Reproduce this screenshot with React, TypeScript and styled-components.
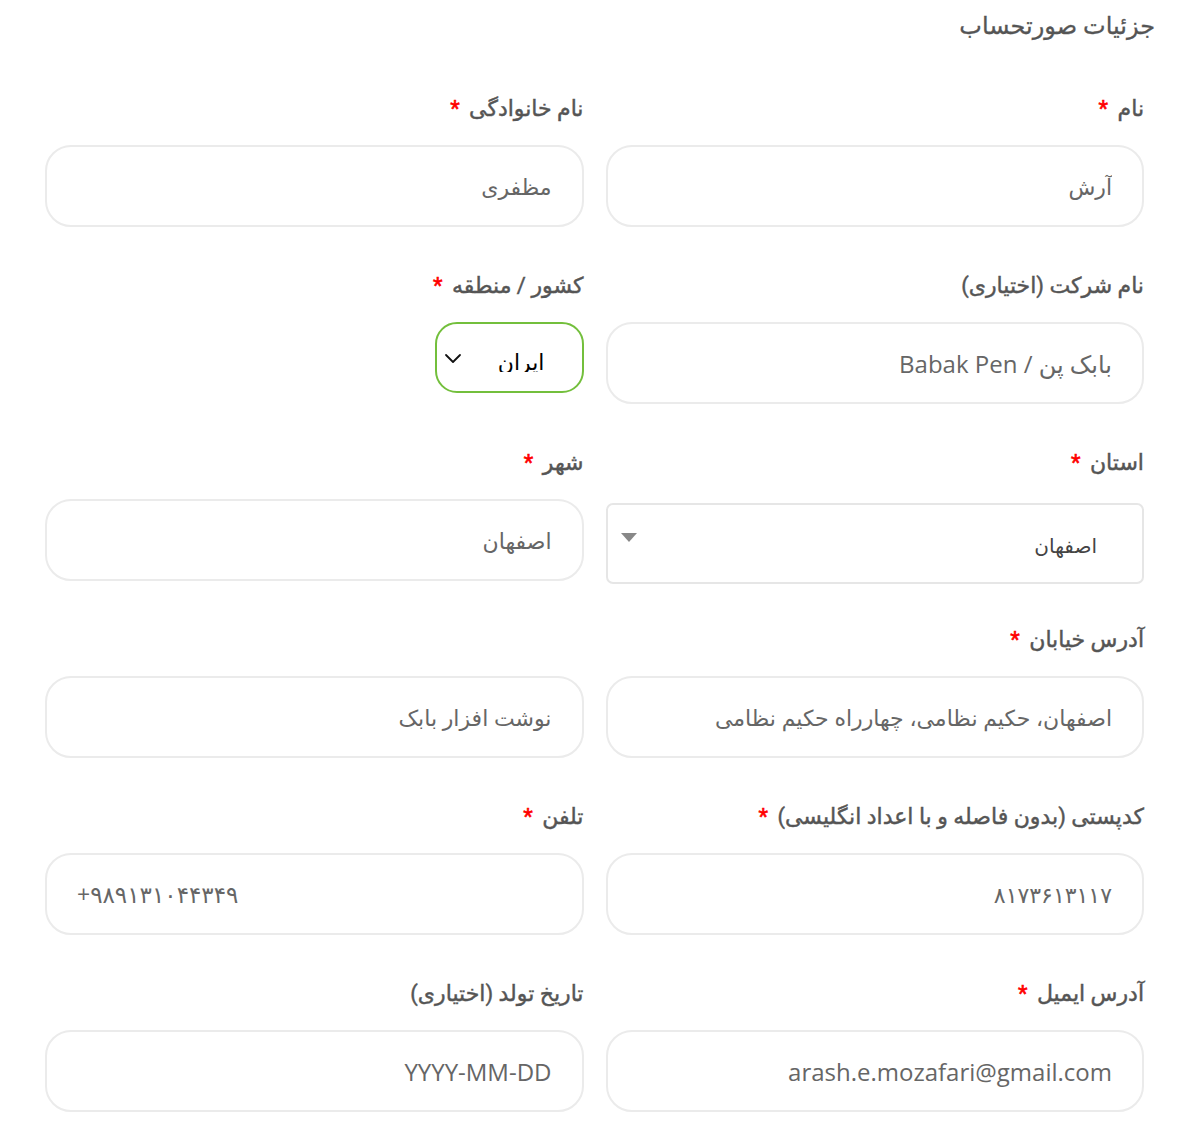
import React from 'react';
import styled, { createGlobalStyle } from 'styled-components';

const GlobalStyle = createGlobalStyle`
    body {
        margin: 0;
        background: #fff;
        font-family: Roboto, "DejaVu Sans", sans-serif;
    }
`;

const Page = styled.div`
    direction: rtl;
    padding: 0 44px 0 45px;
`;

const Title = styled.h3`
    margin: 0 -11px 0 0;
    padding-top: 10px;
    height: 89px;
    box-sizing: border-box;
    font-size: 24px;
    line-height: 32px;
    font-weight: 400;
    -webkit-text-stroke: 0.3px #555;
    color: #555;
`;

const FormGrid = styled.div`
    display: grid;
    grid-template-columns: 1fr 1fr;
    column-gap: 22px;
    row-gap: 39px;
`;

const Field = styled.div`
    display: flex;
    flex-direction: column;
    align-items: stretch;
`;

const Label = styled.label<{ $hidden?: boolean }>`
    display: block;
    height: 36px;
    line-height: 40px;
    margin-bottom: 20px;
    font-size: 22px;
    font-weight: 400;
    -webkit-text-stroke: 0.45px #555;
    color: #555;
    visibility: ${p => (p.$hidden ? 'hidden' : 'visible')};
`;

const Required = styled.abbr`
    color: #f00;
    -webkit-text-stroke: 0.6px #f00;
    text-decoration: none;
    margin-right: 4px;
`;

const TextInput = styled.input<{ $ltr?: boolean; $latin?: boolean }>`
    box-sizing: border-box;
    width: 100%;
    height: 82px;
    border: 2px solid #ebebeb;
    border-radius: 26px;
    padding: 0 30px;
    font-family: "Open Sans", "DejaVu Sans", sans-serif;
    font-size: ${p => (p.$latin ? '24px' : p.$ltr ? '23px' : '22px')};
    color: #666;
    background: #fff;
    outline: none;
    direction: ${p => (p.$ltr ? 'ltr' : 'rtl')};
    text-align: ${p => (p.$ltr ? 'left' : 'right')};

    &::placeholder {
        color: #666;
    }
`;

const CountrySelect = styled.div`
    box-sizing: border-box;
    width: 149px;
    height: 71px;
    border: 2px solid #73bf3c;
    border-radius: 22px;
    display: flex;
    align-items: flex-start;
    justify-content: space-between;
    padding: 25px 37px 0 6px;
    color: #000;
`;

const ClippedValue = styled.span`
    display: block;
    height: 23px;
    overflow: hidden;
    font-size: 22px;
    line-height: 28px;
`;

const Chevron = styled.svg`
    width: 20px;
    height: 20px;
`;

const StateSelect = styled.div`
    box-sizing: border-box;
    width: 100%;
    height: 81px;
    margin: 4px 0 -4px;
    border: 2px solid #e6e6e6;
    border-radius: 7px;
    display: flex;
    align-items: center;
    justify-content: space-between;
    padding: 0 45px 0 13px;
    font-size: 20px;
    color: #444;
`;

const StateValue = styled.span`
    margin-top: 4px;
`;

const Caret = styled.span`
    width: 0;
    height: 0;
    border-left: 8px solid transparent;
    border-right: 8px solid transparent;
    border-top: 9px solid #888;
    margin-top: -12px;
`;

const Star = () => <Required title="required">*</Required>;

export default function App() {
    return (
        <>
            <GlobalStyle />
            <Page>
                <Title>جزئیات صورتحساب</Title>
                <FormGrid>
                    <Field>
                        <Label>نام <Star /></Label>
                        <TextInput readOnly value="آرش" />
                    </Field>
                    <Field>
                        <Label>نام خانوادگی <Star /></Label>
                        <TextInput readOnly value="مظفری" />
                    </Field>

                    <Field>
                        <Label>نام شرکت (اختیاری)</Label>
                        <TextInput $latin readOnly value="بابک پن / Babak Pen" />
                    </Field>
                    <Field>
                        <Label>کشور / منطقه <Star /></Label>
                        <CountrySelect>
                            <ClippedValue>ایران</ClippedValue>
                            <Chevron viewBox="0 0 20 20" fill="none" stroke="#111" strokeWidth="1.8" strokeLinecap="round" strokeLinejoin="round">
                                <path d="M3 6l7 7 7-7" />
                            </Chevron>
                        </CountrySelect>
                    </Field>

                    <Field>
                        <Label>استان <Star /></Label>
                        <StateSelect>
                            <StateValue>اصفهان</StateValue>
                            <Caret />
                        </StateSelect>
                    </Field>
                    <Field>
                        <Label>شهر <Star /></Label>
                        <TextInput readOnly value="اصفهان" />
                    </Field>

                    <Field>
                        <Label>آدرس خیابان <Star /></Label>
                        <TextInput readOnly value="اصفهان، حکیم نظامی، چهارراه حکیم نظامی" />
                    </Field>
                    <Field>
                        <Label $hidden aria-hidden>&nbsp;</Label>
                        <TextInput readOnly value="نوشت افزار بابک" />
                    </Field>

                    <Field>
                        <Label>کدپستی (بدون فاصله و با اعداد انگلیسی) <Star /></Label>
                        <TextInput readOnly value="۸۱۷۳۶۱۳۱۱۷" />
                    </Field>
                    <Field>
                        <Label>تلفن <Star /></Label>
                        <TextInput $ltr readOnly value="+۹۸۹۱۳۱۰۴۴۳۴۹" />
                    </Field>

                    <Field>
                        <Label>آدرس ایمیل <Star /></Label>
                        <TextInput $latin readOnly value="arash.e.mozafari@gmail.com" />
                    </Field>
                    <Field>
                        <Label>تاریخ تولد (اختیاری)</Label>
                        <TextInput $latin readOnly placeholder="YYYY-MM-DD" />
                    </Field>
                </FormGrid>
            </Page>
        </>
    );
}
